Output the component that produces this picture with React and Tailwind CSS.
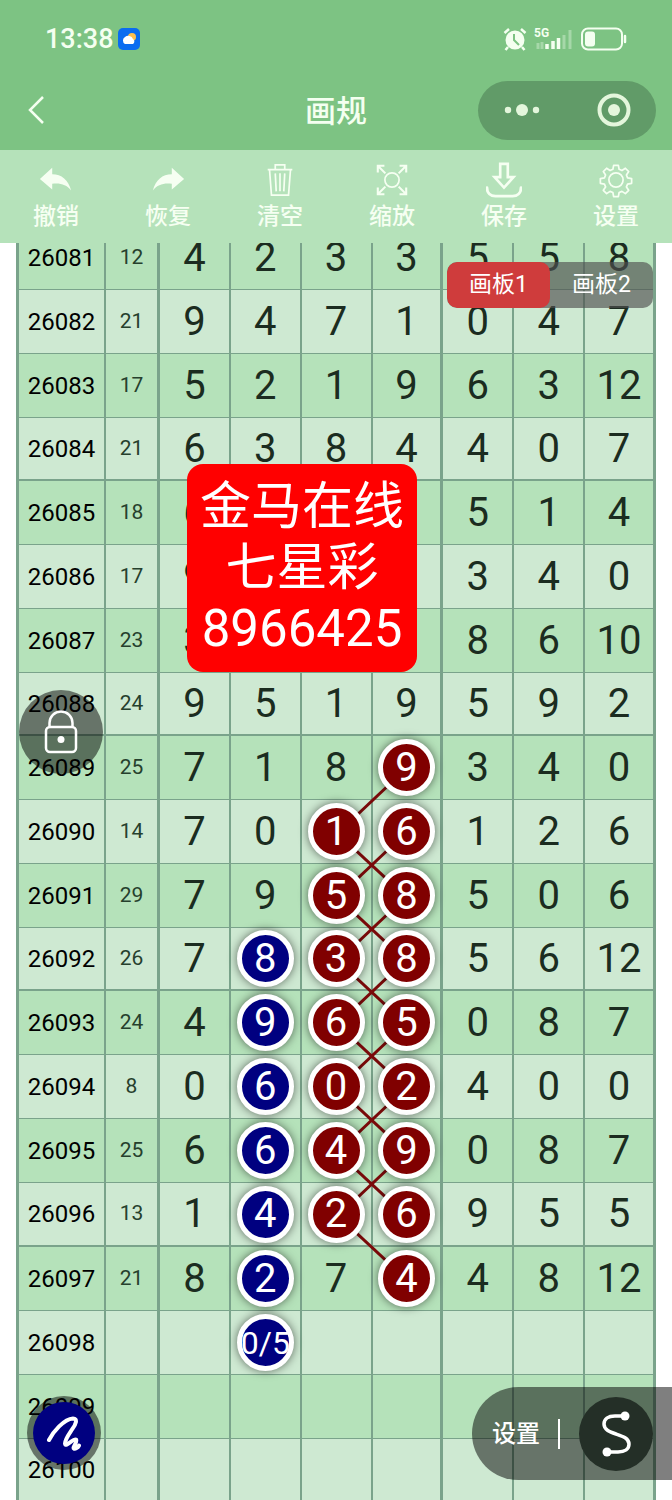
import React, { useState } from 'react';

// m: 'r' = red ball, 'b' = blue ball, '.' = plain
const ROWS = [
    { issue: '26081', sum: 12, nums: [4, 2, 3, 3, 5, 5, 8] },
    { issue: '26082', sum: 21, nums: [9, 4, 7, 1, 0, 4, 7] },
    { issue: '26083', sum: 17, nums: [5, 2, 1, 9, 6, 3, 12] },
    { issue: '26084', sum: 21, nums: [6, 3, 8, 4, 4, 0, 7] },
    { issue: '26085', sum: 18, nums: [6, '', '', '', 5, 1, 4] },
    { issue: '26086', sum: 17, nums: [9, '', '', '', 3, 4, 0] },
    { issue: '26087', sum: 23, nums: [3, '', '', '', 8, 6, 10] },
    { issue: '26088', sum: 24, nums: [9, 5, 1, 9, 5, 9, 2] },
    { issue: '26089', sum: 25, nums: [7, 1, 8, 9, 3, 4, 0], m: '...r' },
    { issue: '26090', sum: 14, nums: [7, 0, 1, 6, 1, 2, 6], m: '..rr' },
    { issue: '26091', sum: 29, nums: [7, 9, 5, 8, 5, 0, 6], m: '..rr' },
    { issue: '26092', sum: 26, nums: [7, 8, 3, 8, 5, 6, 12], m: '.brr' },
    { issue: '26093', sum: 24, nums: [4, 9, 6, 5, 0, 8, 7], m: '.brr' },
    { issue: '26094', sum: 8, nums: [0, 6, 0, 2, 4, 0, 0], m: '.brr' },
    { issue: '26095', sum: 25, nums: [6, 6, 4, 9, 0, 8, 7], m: '.brr' },
    { issue: '26096', sum: 13, nums: [1, 4, 2, 6, 9, 5, 5], m: '.brr' },
    { issue: '26097', sum: 21, nums: [8, 2, 7, 4, 4, 8, 12], m: '.b.r' },
    { issue: '26098', sum: '', nums: ['', '0/5', '', '', '', '', ''], m: '.b..' },
    { issue: '26099', sum: '', nums: ['', '', '', '', '', '', ''] },
    { issue: '26100', sum: '', nums: ['', '', '', '', '', '', ''] },
];

const markAt = (row, col) => (ROWS[row] && ROWS[row].m ? ROWS[row].m[col] : undefined);

const TOOLS = [
    {
        label: '撤销',
        icon: <path fill="currentColor" stroke="none" d="M1 17 14 5v7c10 0 17 6 20 17-5-6-11-8-20-7v6z" />,
    },
    {
        label: '恢复',
        icon: <path fill="currentColor" stroke="none" d="M35 17 22 5v7C12 12 5 18 2 29c5-6 11-8 20-7v6z" />,
    },
    {
        label: '清空',
        icon: <path d="M5 7h26M13 7V2h10v5M7 8l2 26h18l2-26M13 11l1 19M18 11v19M23 11l-1 19" />,
    },
    {
        label: '缩放',
        icon: (
            <>
                <circle cx="18" cy="18" r="7.5" />
                <path strokeWidth="2.2" d="M3 10V3h7M3 3l8 8M26 3h7v7M33 3l-8 8M3 26v7h7M3 33l8-8M26 33h7v-7M33 33l-8-8" />
            </>
        ),
    },
    {
        label: '保存',
        icon: (
            <>
                <path strokeWidth="2.8" d="M14 1h8v14h6L18 26 8 15h6z" />
                <path strokeWidth="3" strokeLinecap="round" d="M0 26c0 6 4 9 9 9h18c5 0 9-3 9-9" />
            </>
        ),
    },
    {
        label: '设置',
        icon: (
            <>
                <circle cx="18" cy="18" r="7.5" />
                <path
                    strokeLinejoin="round"
                    d="M15.5 2.500h5l.8 4.200 3 1.300 3.600-2.400 3.500 3.500-2.400 3.600 1.200 3 4.300.8v5l-4.300.8-1.200 3 2.400 3.600-3.500 3.500-3.600-2.400-3 1.200-.8 4.300h-5l-.8-4.300-3-1.200-3.600 2.400-3.500-3.500 2.400-3.600-1.200-3-4.300-.8v-5l4.300-.8 1.200-3-2.400-3.600 3.500-3.500 3.600 2.400 3-1.300z"
                />
            </>
        ),
    },
];

const StatusBar = () => (
    <div className="flex h-[78px] items-center justify-between px-[45px]">
        <div className="flex items-center gap-1">
            <span className="text-[27px] leading-8 font-medium">13:38</span>
            <svg viewBox="0 0 22 22" className="h-[22px] w-[22px]" aria-hidden="true">
                <rect width="22" height="22" rx="5" fill="#0a6cf0" />
                <circle cx="14" cy="9" r="4" fill="#ffc04d" />
                <path fill="#fff" d="M7 16a4 4 0 0 1 0-7 5 5 0 0 1 8 2 3 3 0 0 1 0 5z" />
            </svg>
        </div>
        <div className="flex items-center gap-1.5">
            <svg viewBox="0 0 24 24" className="h-6 w-6" aria-hidden="true">
                <circle cx="12" cy="13" r="9.500" fill="currentColor" />
                <path d="M1.500 6 6 2M22.500 6 18 2M5 20l-2.500 3M19 20l2.500 3" stroke="currentColor" strokeWidth="2.500" />
                <path d="M11 7v6l5 5" fill="none" stroke="#7dc383" strokeWidth="2" />
            </svg>
            <svg viewBox="0 0 42 24" className="h-6 w-[42px]" aria-hidden="true">
                <text x="1" y="10" fontSize="12" fontWeight="700" fill="currentColor">5G</text>
                <path d="M5 22v-6M9 22v-7M31 22V8M37 22V3" stroke="currentColor" strokeWidth="3" opacity=".35" />
                <path d="M14 22v-5M20 22v-8M25.500 22V11" stroke="currentColor" strokeWidth="3.500" />
            </svg>
            <svg viewBox="0 0 46 24" className="h-6 w-[46px]" aria-hidden="true">
                <rect x="1" y="1.500" width="40" height="21" rx="6" fill="none" stroke="currentColor" strokeWidth="2" />
                <rect x="4" y="4.500" width="10" height="15" rx="3" fill="currentColor" />
                <path d="M44 9v6" stroke="currentColor" strokeWidth="2.500" strokeLinecap="round" />
            </svg>
        </div>
    </div>
);

const NavBar = () => (
    <div className="grid h-16 grid-cols-[1fr_auto_1fr] items-center px-4">
        <button type="button" aria-label="返回" className="flex h-12 w-10 items-center justify-center">
            <svg viewBox="0 0 16 28" className="h-7 w-4" fill="none" stroke="currentColor" strokeWidth="2.500">
                <path d="M15 1 2 14l13 13" />
            </svg>
        </button>
        <h1 className="pt-1 text-[31px] leading-10 font-medium">画规</h1>
        <div className="flex h-[59px] w-[178px] items-center justify-between justify-self-end rounded-full bg-[#619b68] px-6 text-[#e4f6dc]">
            <button type="button" aria-label="更多">
                <svg viewBox="0 0 40 16" className="h-4 w-10" fill="currentColor">
                    <circle cx="6" cy="8" r="3.200" />
                    <circle cx="20" cy="8" r="6" />
                    <circle cx="34" cy="8" r="3.200" />
                </svg>
            </button>
            <button type="button" aria-label="关闭">
                <svg viewBox="0 0 36 36" className="h-9 w-9">
                    <circle cx="18" cy="18" r="14.500" fill="none" stroke="currentColor" strokeWidth="4" />
                    <circle cx="18" cy="18" r="6" fill="currentColor" />
                </svg>
            </button>
        </div>
    </div>
);

const Toolbar = () => (
    <div className="grid h-[93px] grid-cols-6 bg-[#b5e2ba] text-[#f6fff2]">
        {TOOLS.map((tool) => (
            <button key={tool.label} type="button" className="flex flex-col items-center gap-[5px] pt-3">
                <svg viewBox="-1 -1 38 38" className="h-9 w-9" fill="none" stroke="currentColor" strokeWidth="1.800">
                    {tool.icon}
                </svg>
                <span className="text-[23px] leading-7 font-medium">{tool.label}</span>
            </button>
        ))}
    </div>
);

// Line from the centre of this ball to a neighbour in the next row
const Link = ({ dir }) => (
    <svg
        viewBox="0 0 10 10"
        preserveAspectRatio="none"
        className={`absolute top-1/2 h-16 w-full ${dir === 'left' ? 'right-1/2' : 'left-1/2'}`}
        aria-hidden="true"
    >
        <path
            d={dir === 'left' ? 'M10 0 0 10' : 'M0 0 10 10'}
            stroke="#7a0a0a"
            strokeWidth="3"
            vectorEffect="non-scaling-stroke"
        />
    </svg>
);

const Ball = ({ mark, value }) => (
    <span
        className={`relative z-10 flex size-[57px] shrink-0 items-center justify-center rounded-full border-5 border-white text-white shadow-[0_0_10px_rgba(0,0,0,0.55)] ${
            mark === 'r' ? 'bg-[#800000]' : 'bg-[#000080]'
        } ${String(value).length > 1 ? 'text-[32px]' : 'text-[40px]'}`}
    >
        {value}
    </span>
);

const NumberCell = ({ row, col, value, bottom }) => {
    const mark = markAt(row, col);
    const marked = mark === 'r' || mark === 'b';
    const right = col === 3 || col === 6 ? 'border-r-3' : 'border-r-2';

    return (
        <td className={`border-[#7aa38b] p-0 ${right} ${bottom}`}>
            <div className="relative flex h-[57px] items-center justify-center text-[40px] leading-none text-[#1b2c20]">
                {mark === 'r' && col > 2 && markAt(row + 1, col - 1) === 'r' && <Link dir="left" />}
                {mark === 'r' && col < 3 && markAt(row + 1, col + 1) === 'r' && <Link dir="right" />}
                {marked ? <Ball mark={mark} value={value} /> : value}
            </div>
        </td>
    );
};

const TrendTable = () => (
    <table aria-label="走势" className="w-full table-fixed border-separate border-spacing-0">
        <colgroup>
            <col className="w-[90px]" />
            <col className="w-[54px]" />
            <col span="7" />
        </colgroup>
        <tbody>
            {ROWS.map((r, i) => {
                const groupEnd = i % 4 === 3;
                const bottom = groupEnd && i < 16 ? 'border-b-2' : 'border-b';
                return (
                    <tr
                        key={r.issue}
                        className={`last:h-[62px] ${groupEnd && i < 12 ? 'h-[63px]' : 'h-16'} ${i % 2 ? 'bg-[#cee9d2]' : 'bg-[#b5e2ba]'}`}
                    >
                        <th
                            scope="row"
                            className={`border-r-2 border-l-3 border-[#7aa38b] p-0 text-2xl font-normal text-black ${bottom}`}
                        >
                            {r.issue}
                        </th>
                        <td className={`border-r-3 border-[#7aa38b] p-0 text-center text-[21px] text-[#26402d] ${bottom}`}>
                            {r.sum}
                        </td>
                        {r.nums.map((n, col) => (
                            <NumberCell key={col} row={i} col={col} value={n} bottom={bottom} />
                        ))}
                    </tr>
                );
            })}
        </tbody>
    </table>
);

const BoardTabs = () => {
    const [board, setBoard] = useState(1);

    return (
        <div className="absolute top-[262px] right-[19px] z-20 flex overflow-hidden rounded-[10px] bg-[#505050]/65 text-white">
            {[1, 2].map((n) => (
                <button
                    key={n}
                    type="button"
                    onClick={() => setBoard(n)}
                    className={`h-[46px] w-[103px] text-[23px] ${board === n ? 'rounded-[10px] bg-[#cf3c3c]' : ''}`}
                >
                    画板{n}
                </button>
            ))}
        </div>
    );
};

const App = () => {
    return (
        <div
            lang="zh-CN"
            className="relative min-h-screen overflow-hidden bg-white [font-family:Roboto,'Noto_Sans_CJK_SC',sans-serif]"
        >
            <header className="relative z-20">
                <div className="bg-[#7dc383] pb-2 text-[#f4fff0]">
                    <StatusBar />
                    <NavBar />
                </div>
                <Toolbar />
            </header>

            {/* first row slides under the toolbar */}
            <main className="relative z-0 mx-4 -mt-[17px] -mb-px">
                <TrendTable />
            </main>

            <BoardTabs />

            <div className="absolute top-[464px] left-[187px] z-20 w-[230px] rounded-2xl bg-[#ff0000] pt-3 pb-[13px] text-center text-[51px] leading-[61px] text-white">
                <p>金马在线</p>
                <p>七星彩</p>
                <p>8966425</p>
            </div>

            <button
                type="button"
                aria-label="锁定"
                className="absolute top-[690px] left-[19px] z-20 flex size-[84px] items-center justify-center rounded-full bg-black/50 text-white"
            >
                <svg viewBox="0 0 34 44" className="h-11 w-[34px]" fill="none" stroke="currentColor" strokeWidth="2.500">
                    <rect x="2" y="17" width="30" height="25" rx="4" />
                    <path d="M5.500 17v-4a11.500 11.500 0 0 1 23 0v4" />
                    <circle cx="17" cy="29.500" r="3.500" fill="currentColor" stroke="none" />
                </svg>
            </button>

            <button
                type="button"
                aria-label="画笔"
                className="absolute top-[1396px] left-[27px] z-20 flex size-[74px] items-center justify-center rounded-full bg-black/50 text-white"
            >
                <span className="flex size-[62px] items-center justify-center rounded-full bg-[#000080]">
                    <svg
                        viewBox="0 0 36 36"
                        className="h-9 w-9"
                        fill="none"
                        stroke="currentColor"
                        strokeWidth="4"
                        strokeLinecap="round"
                        strokeLinejoin="round"
                    >
                        <path d="M3 25C7 17 18 4 27 3.500c5 0 3 6-1 11-4 6-7 10-7 14 0 5 9-6 11-4s-4 8-2 9c1 1 4-1 5-3" />
                    </svg>
                </span>
            </button>

            <div className="absolute top-[1387px] right-0 z-20 flex h-[93px] items-center rounded-l-full bg-black/50 pr-[19px] pl-5 text-white">
                <button type="button" className="text-2xl leading-8 font-medium">设置</button>
                <span className="mr-[19px] ml-[18px] h-[30px] w-0.5 bg-white" />
                <button
                    type="button"
                    aria-label="曲线"
                    className="flex size-[74px] items-center justify-center rounded-full bg-[#242f27]"
                >
                    <svg viewBox="0 0 30 46" className="h-[46px] w-[30px]" fill="none" stroke="currentColor" strokeWidth="3.500">
                        <path d="M24 5H14C7 5 3 8 3 13c0 6 6 8 12 10s13 4 13 10c0 5-4 8-11 8H6" />
                        <circle cx="24" cy="5" r="4.500" fill="currentColor" stroke="none" />
                        <circle cx="6" cy="41" r="4.500" fill="currentColor" stroke="none" />
                    </svg>
                </button>
            </div>
        </div>
    );
};

export default App;
